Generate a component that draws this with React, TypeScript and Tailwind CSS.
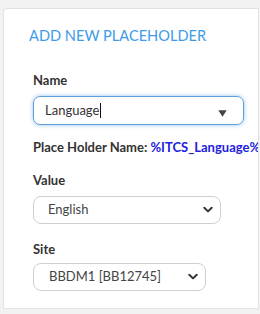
import React from "react";

const Chevron = () => (
  <svg width="10" height="7" viewBox="0 0 10 7" className="absolute right-[7px] top-1/2 -translate-y-1/2">
    <path d="M1.3 1.3 L5 4.9 L8.7 1.3" fill="none" stroke="#333" strokeWidth="2" strokeLinecap="round" strokeLinejoin="round" />
  </svg>
);

export default function App() {
  return (
    <div
      className="w-[260px] h-[314px] bg-[#f2f2f2] pt-[8px] pl-[3px] pr-[1px] pb-[5px] overflow-hidden"
      style={{ fontFamily: 'Lato, "Open Sans", sans-serif' }}
    >
      <div className="h-full bg-white border border-[#e2e2e2] rounded-tl-[4px] pl-[29px] overflow-hidden">
        <div className="pt-[17px] -ml-[4px] text-[14.6px] leading-[20px] text-[#3d9be9]">ADD NEW PLACEHOLDER</div>
        <div className="mt-[26px] text-[13px] leading-[16px] font-bold text-[#333]">Name</div>
        <div className="relative mt-[8px] w-[211px] h-[29px] rounded-[7px] border border-[#5d9fd8] shadow-[0_0_4px_rgba(80,150,220,0.6)] flex items-center pl-[11px] text-[13px] text-[#333]">
          <span>Language</span>
          <span className="inline-block w-[1px] h-[15px] bg-[#111] ml-[1px]" />
          <svg width="9" height="7" viewBox="0 0 9 7" className="absolute right-[16px] top-[13px]">
            <path d="M0.3 0.3 H8.7 L4.5 6.8 Z" fill="#444" />
          </svg>
        </div>
        <div className="mt-[14px] text-[13px] leading-[16px] font-bold text-[#333] whitespace-nowrap">
          Place Holder Name: <span className="text-[#2222dd]">%ITCS_Language%</span>
        </div>
        <div className="mt-[17px] text-[13px] leading-[16px] font-bold text-[#333]">Value</div>
        <div className="relative mt-[8px] w-[188px] h-[28px] rounded-[8px] border border-[#cfcfcf] flex items-center pl-[14px] text-[13px] text-[#444]">
          <span>English</span>
          <Chevron />
        </div>
        <div className="mt-[17px] text-[13px] leading-[16px] font-bold text-[#333]">Site</div>
        <div className="relative mt-[6px] w-[173px] h-[28px] rounded-[8px] border border-[#cfcfcf] flex items-center pl-[15px] text-[13px] text-[#444]">
          <span>BBDM1 [BB12745]</span>
          <Chevron />
        </div>
      </div>
    </div>
  );
}
